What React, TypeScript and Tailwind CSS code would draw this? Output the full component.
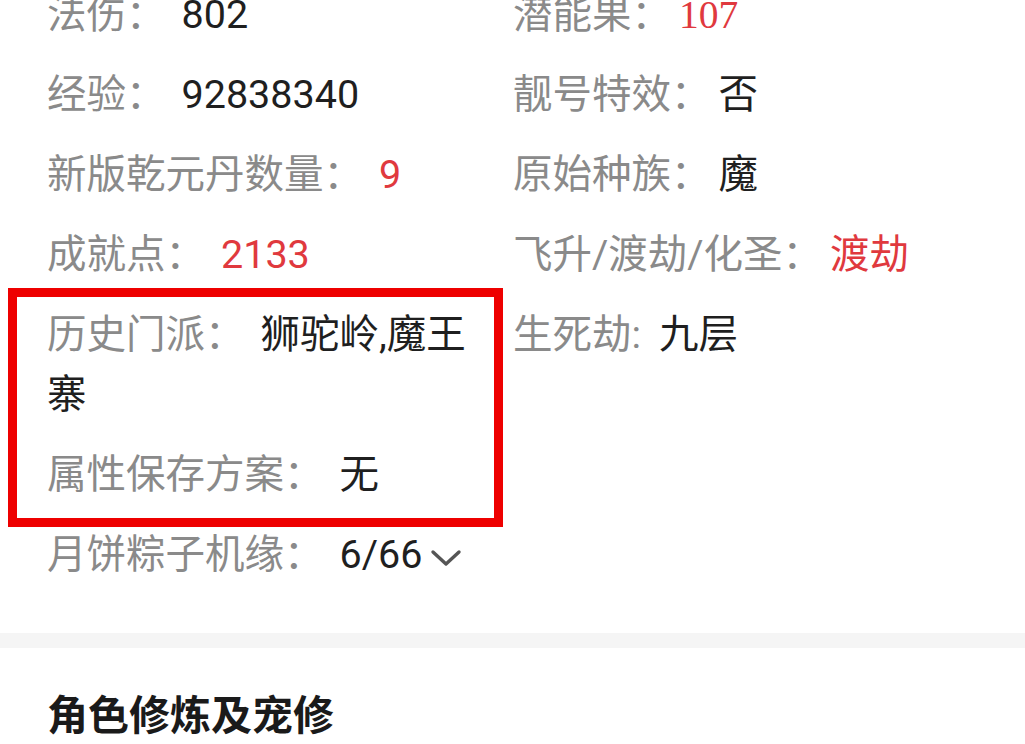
import React from "react";

type Item = {
  label: string;
  value: string;
  red?: boolean;
  serif?: boolean;
  chevron?: boolean;
};

const leftItems: Item[] = [
  { label: "法伤：", value: "802" },
  { label: "经验：", value: "92838340" },
  { label: "新版乾元丹数量：", value: "9", red: true },
  { label: "成就点：", value: "2133", red: true },
  { label: "历史门派：", value: "狮驼岭,魔王寨" },
  { label: "属性保存方案：", value: "无" },
  { label: "月饼粽子机缘：", value: "6/66", chevron: true },
];

const rightItems: Item[] = [
  { label: "潜能果：", value: "107", red: true, serif: true },
  { label: "靓号特效：", value: "否" },
  { label: "原始种族：", value: "魔" },
  { label: "飞升/渡劫/化圣：", value: "渡劫", red: true },
  { label: "生死劫: ", value: "九层" },
];

function Row({ item, gap }: { item: Item; gap: string }) {
  return (
    <div className="leading-[60px]">
      <span className="text-[#8a8a8a]">{item.label}</span>
      <span
        className={`${gap} ${item.red ? "text-[#e0393e]" : "text-[#1f1f1f]"} ${
          item.serif ? "font-['Liberation_Serif',serif]" : ""
        }`}
      >
        {item.value}
      </span>
      {item.chevron && (
        <svg
          className="ml-[8px] inline-block align-middle text-[#555]"
          width="32"
          height="20"
          viewBox="0 0 32 20"
          fill="none"
          stroke="currentColor"
          strokeWidth="3.4"
          strokeLinecap="round"
          strokeLinejoin="round"
        >
          <path d="M3 4l13 12L29 4" />
        </svg>
      )}
    </div>
  );
}

export default function App() {
  return (
    <div className="relative h-[744px] w-[1025px] overflow-hidden bg-white font-['Roboto','Noto_Sans_CJK_SC',sans-serif] text-[39.5px]">
      <div className="-mt-[15px] grid grid-cols-[430px_1fr] gap-x-[36px] pl-[47px] pr-[20px] pb-[48px]">
        <div className="flex flex-col gap-y-[20px]">
          {leftItems.map((it) => (
            <Row key={it.label} item={it} gap="ml-[16px]" />
          ))}
        </div>
        <div className="flex flex-col gap-y-[20px]">
          {rightItems.map((it) => (
            <Row key={it.label} item={it} gap="ml-[8px]" />
          ))}
        </div>
      </div>

      <div className="h-[15px] bg-[#f5f5f5]" />

      <div className="px-[47px] pt-[34px]">
        <h2 className="text-[41px] font-bold leading-[60px] text-[#1a1a1a] font-['Noto_Sans_CJK_SC',sans-serif]">
          角色修炼及宠修
        </h2>
      </div>

      <div className="pointer-events-none absolute left-[8px] top-[288px] h-[239px] w-[495px] border-[9px] border-[#ee0000]" />
    </div>
  );
}
